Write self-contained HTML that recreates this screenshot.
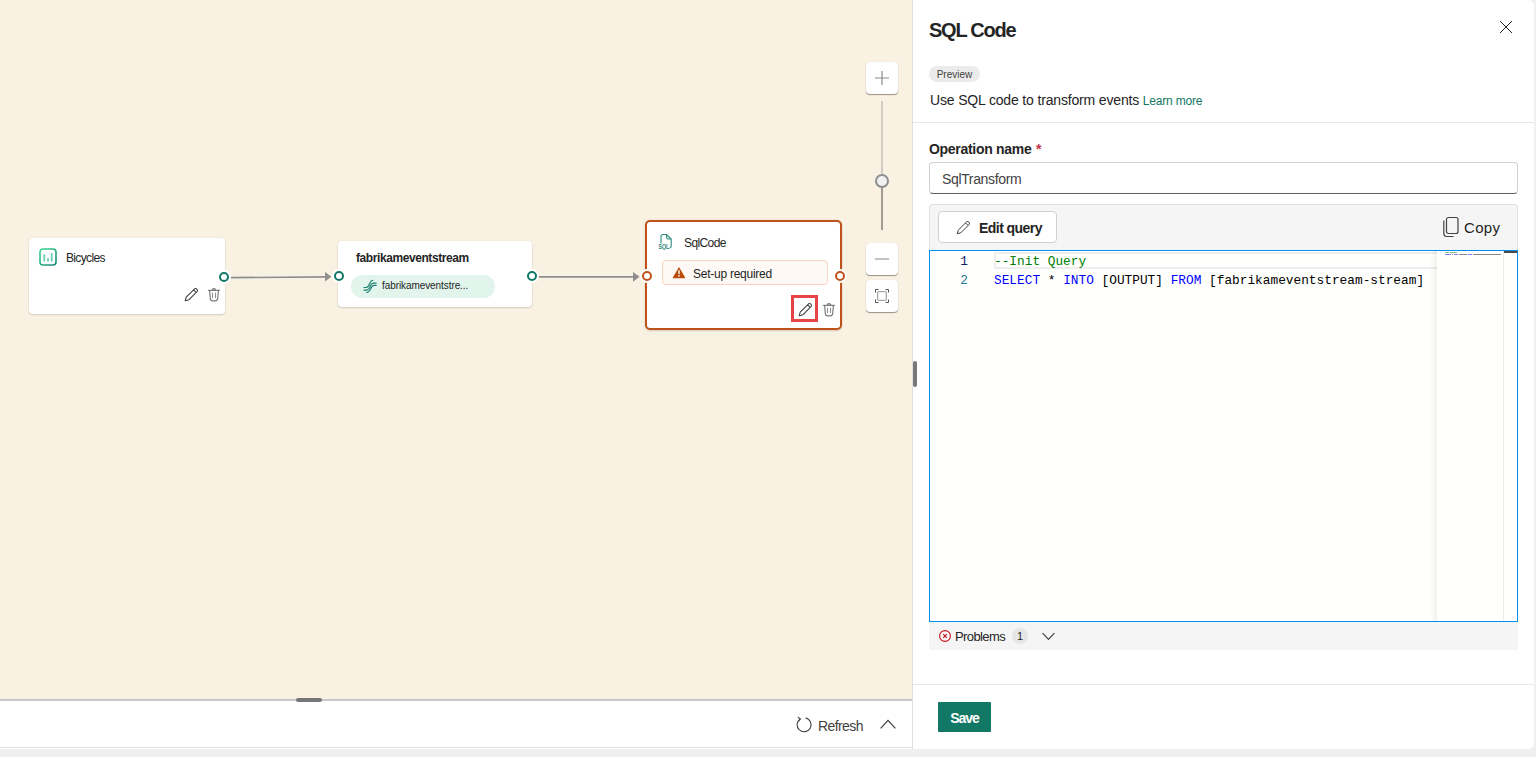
<!DOCTYPE html>
<html><head><meta charset="utf-8">
<style>
*{box-sizing:border-box;margin:0;padding:0}
html,body{width:1536px;height:757px;overflow:hidden;background:#F0F0F0;font-family:"Liberation Sans",sans-serif;color:#242424}
.abs{position:absolute}
.nw{white-space:nowrap}
#canvas{position:absolute;left:0;top:0;width:912px;height:699px;background:#F9F2E3}
#bottombar{position:absolute;left:0;top:699px;width:913px;height:49px;background:#fff;border-top:2px solid #C8C8C8;border-bottom:1px solid #E0E0E0}
#panel{position:absolute;left:912px;top:0;width:622px;height:749px;background:#fff;border-left:1px solid #E0E0E0;border-radius:0 6px 6px 0}
.node{position:absolute;background:#fff;border-radius:4px;box-shadow:0 1px 2px rgba(0,0,0,.14),0 0 2px rgba(0,0,0,.08)}
.port{position:absolute;width:14px;height:14px;border-radius:50%;background:#fff}
.port::after{content:"";position:absolute;left:2px;top:2px;width:10px;height:10px;border-radius:50%;border:2px solid #117865;box-sizing:border-box;background:#fff}
.port.o::after{border-color:#C0531C}
.t12{font-size:12px}
.zbtn{position:absolute;left:866px;width:32px;height:32px;background:#fff;border-radius:4px;box-shadow:0 1px 1px rgba(40,30,20,.45),0 0 1px rgba(0,0,0,.15)}
.code{font-family:"Liberation Mono",monospace;font-size:12.8px;white-space:pre}
.kw{color:#0000FF}
</style></head><body>
<div id="canvas">
  <svg class="abs" style="left:0;top:0" width="912" height="699">
    <path d="M230 277.6 L327 276.9" stroke="#8F8F8F" stroke-width="1.6" fill="none"/>
    <path d="M325 271.9 L331.4 276.7 L325 281.6 Z" fill="#8F8F8F"/>
    <path d="M538 276.9 L635 276.9" stroke="#8F8F8F" stroke-width="1.6" fill="none"/>
    <path d="M633 271.9 L639.6 276.8 L633 281.8 Z" fill="#8F8F8F"/>
  </svg>
  <!-- node 1 -->
  <div class="node" style="left:29px;top:238px;width:196px;height:76px">
    <svg class="abs" style="left:10px;top:10px" width="18" height="18" viewBox="0 0 18 18">
      <defs><linearGradient id="g1" x1="0" y1="0" x2="1" y2="1"><stop offset="0" stop-color="#3BD58E"/><stop offset="1" stop-color="#138573"/></linearGradient></defs>
      <rect x="1" y="1" width="16" height="16" rx="3" fill="none" stroke="url(#g1)" stroke-width="1.6"/>
      <rect x="4.4" y="6.4" width="1.8" height="7.1" fill="#6BCDB5"/><rect x="8.1" y="10" width="1.8" height="3.5" fill="#6BCDB5"/><rect x="11.8" y="5.2" width="1.8" height="8.3" fill="#6BCDB5"/>
    </svg>
    <div class="abs t12 nw" style="left:37px;top:13px;letter-spacing:-0.65px">Bicycles</div>
    <svg class="abs" style="left:155px;top:49px" width="15" height="15" viewBox="0 0 15 15"><path d="M1.2 13.8 L2.2 10.2 L10.6 1.8 A1.9 1.9 0 0 1 13.2 4.4 L4.8 12.8 Z M9.6 2.9 L12.1 5.4" fill="none" stroke="#424242" stroke-width="1.1" stroke-linejoin="round"/></svg>
    <svg class="abs" style="left:178px;top:49px" width="14" height="15" viewBox="0 0 14 15"><path d="M1.6 3.4 H12.4 M5.2 3.4 A1.8 1.8 0 0 1 8.8 3.4 M2.6 3.6 L3.3 11.4 A2.6 2.6 0 0 0 5.9 13.8 H8.1 A2.6 2.6 0 0 0 10.7 11.4 L11.4 3.6" fill="none" stroke="#7A7A7A" stroke-width="1.15" stroke-linecap="round"/><path d="M5.5 6 V10.6 M8.5 6 V10.6" stroke="#909090" stroke-width="1.1" stroke-linecap="round"/></svg>
  </div>
  <div class="port" style="left:217px;top:270px"></div>
  <!-- node 2 -->
  <div class="node" style="left:338px;top:241px;width:194px;height:66px">
    <div class="abs t12 nw" style="left:18px;top:10px;font-weight:bold;letter-spacing:-0.42px">fabrikameventstream</div>
    <div class="abs" style="left:13px;top:34px;width:144px;height:23px;border-radius:12px;background:#E1F5ED"></div>
    <svg class="abs" style="left:25px;top:38px" width="14" height="15" viewBox="0 0 14 15"><path d="M1 8.5 H3.2 C5.4 8.5 5.9 6 6.9 4 C7.7 2.3 8.5 1.4 9.9 1.3 M1 11.1 H3.8 C6.1 11.1 6.6 8.5 7.5 6.5 C8.4 4.6 9.2 4.1 10.6 4.1 H13.2 M3.6 13.5 C5.9 13.3 6.9 11.4 7.9 9.2 C8.7 7.3 9.5 6.3 10.9 6.3 H13.2" fill="none" stroke="#1B7F6E" stroke-width="1.15" stroke-linecap="round"/></svg>
    <div class="abs nw" style="left:44px;top:39px;font-size:10px;letter-spacing:-0.08px">fabrikameventstre...</div>
  </div>
  <div class="port" style="left:332px;top:269px"></div>
  <div class="port" style="left:525px;top:269px"></div>
  <!-- node 3 -->
  <div class="node" style="left:645px;top:220px;width:197px;height:110px;border:2px solid #C0531C;border-radius:5px">
    <svg class="abs" style="left:11px;top:11px" width="16" height="17" viewBox="0 0 16 17"><path d="M3 10.6 V3.4 A1.9 1.9 0 0 1 4.9 1.5 H8.6 L13.2 6.1 V13.2 A2 2 0 0 1 11.6 15.1 M8.6 1.5 V4.6 A1.4 1.4 0 0 0 10 6 H13.2" fill="none" stroke="#2A8C7A" stroke-width="1.1"/><text x="0.6" y="16" font-family="Liberation Sans" font-weight="bold" font-size="6.8" textLength="10.6" lengthAdjust="spacingAndGlyphs" fill="#1B7F6E">SQL</text></svg>
    <div class="abs t12 nw" style="left:37px;top:14px;letter-spacing:-0.6px">SqlCode</div>
    <div class="abs" style="left:15px;top:38px;width:166px;height:25px;border:1px solid #FCD3BC;background:#FFF9F5;border-radius:4px"></div>
    <svg class="abs" style="left:25px;top:44px" width="14" height="13" viewBox="0 0 14 13"><path d="M7 0.9 L13.2 11.6 A0.6 0.6 0 0 1 12.7 12.2 H1.3 A0.6 0.6 0 0 1 0.8 11.6 Z" fill="#BC4B09"/><rect x="6.3" y="4" width="1.4" height="4.2" rx=".7" fill="#fff"/><circle cx="7" cy="9.9" r=".8" fill="#fff"/></svg>
    <div class="abs t12 nw" style="left:46px;top:45px;letter-spacing:-0.25px">Set-up required</div>
    <div class="abs" style="left:144px;top:73px;width:27px;height:27px;border:3px solid #E64548"></div>
    <svg class="abs" style="left:151px;top:80px" width="15" height="15" viewBox="0 0 15 15"><path d="M1.2 13.8 L2.2 10.2 L10.6 1.8 A1.9 1.9 0 0 1 13.2 4.4 L4.8 12.8 Z M9.6 2.9 L12.1 5.4" fill="none" stroke="#424242" stroke-width="1.1" stroke-linejoin="round"/></svg>
    <svg class="abs" style="left:175px;top:80px" width="14" height="15" viewBox="0 0 14 15"><path d="M1.6 3.4 H12.4 M5.2 3.4 A1.8 1.8 0 0 1 8.8 3.4 M2.6 3.6 L3.3 11.4 A2.6 2.6 0 0 0 5.9 13.8 H8.1 A2.6 2.6 0 0 0 10.7 11.4 L11.4 3.6" fill="none" stroke="#7A7A7A" stroke-width="1.15" stroke-linecap="round"/><path d="M5.5 6 V10.6 M8.5 6 V10.6" stroke="#909090" stroke-width="1.1" stroke-linecap="round"/></svg>
  </div>
  <div class="port o" style="left:640px;top:269px"></div>
  <div class="port o" style="left:833px;top:269px"></div>
  <!-- zoom controls -->
  <div class="zbtn" style="top:62px"><svg class="abs" style="left:9px;top:9px" width="14" height="14"><path d="M0 7 H14 M7 0 V14" stroke="#8A8A8A" stroke-width="1.2"/></svg></div>
  <div class="abs" style="left:881px;top:101px;width:2px;height:74px;background:#D2CBBF"></div>
  <div class="abs" style="left:881px;top:186px;width:2px;height:44px;background:#A29C93"></div>
  <div class="abs" style="left:875px;top:174px;width:14px;height:14px;border-radius:50%;border:2px solid #8F8F8F;background:#F1F1F1"></div>
  <div class="zbtn" style="top:243px"><svg class="abs" style="left:9px;top:15px" width="14" height="2"><path d="M0 1 H14" stroke="#A0A0A0" stroke-width="1.3"/></svg></div>
  <div class="zbtn" style="top:280px"><svg class="abs" style="left:9px;top:9px" width="14" height="14" viewBox="0 0 14 14"><path d="M0.5 3.5 V0.5 H3.5 M10.5 0.5 H13.5 V3.5 M13.5 10.5 V13.5 H10.5 M3.5 13.5 H0.5 V10.5" fill="none" stroke="#555" stroke-width="1"/><rect x="2.6" y="2.6" width="8.8" height="8.8" rx="1.5" fill="none" stroke="#A8A8A8" stroke-width="1.3"/></svg></div>
</div>
<!-- bottom bar -->
<div id="bottombar">
  <div class="abs" style="left:296px;top:-3px;width:26px;height:4px;border-radius:2px;background:#767676"></div>
  <svg class="abs" style="left:795px;top:15px" width="18" height="18" viewBox="0 0 18 18"><path d="M5.2 2.9 A7 7 0 1 0 10.6 1.9" fill="none" stroke="#424242" stroke-width="1.1"/><path d="M2.8 1.2 L5.4 2.8 L3.6 5.3" fill="none" stroke="#424242" stroke-width="1.1"/></svg>
  <div class="abs nw" style="left:818px;top:17px;font-size:14px;color:#424242;letter-spacing:-0.6px">Refresh</div>
  <svg class="abs" style="left:880px;top:18px" width="16" height="10" viewBox="0 0 16 10"><path d="M0.6 9.4 L8 1.4 L15.4 9.4" fill="none" stroke="#424242" stroke-width="1.2"/></svg>
</div>
<div class="abs" style="left:0;top:748px;width:913px;height:1px;background:#fff"></div>
<!-- handle -->
<div class="abs" style="left:913px;top:361px;width:4px;height:26px;border-radius:2px;background:#787878;z-index:5"></div>
<!-- panel -->
<div id="panel">
  <div class="abs nw" style="left:16px;top:19px;font-size:20px;font-weight:bold;color:#242424;letter-spacing:-1.25px">SQL Code</div>
  <svg class="abs" style="left:586px;top:20px" width="14" height="14" viewBox="0 0 14 14"><path d="M1 1 L13 13 M13 1 L1 13" stroke="#242424" stroke-width="1"/></svg>
  <div class="abs nw" style="left:16px;top:66px;width:51px;height:16px;border-radius:8px;background:#EBEBEB;font-size:10px;color:#424242;line-height:17px;text-align:center">Preview</div>
  <div class="abs nw" style="left:17px;top:92px;font-size:14px;letter-spacing:-0.16px">Use SQL code to transform events <span style="font-size:12px;color:#117865;letter-spacing:-0.2px;margin-left:0px">Learn more</span></div>
  <div class="abs" style="left:0;top:122px;width:621px;height:1px;background:#E6E6E6"></div>
  <div class="abs nw" style="left:16px;top:141px;font-size:14px;font-weight:bold;letter-spacing:-0.3px">Operation name <span style="color:#C4314B;margin-left:1px">*</span></div>
  <div class="abs" style="left:16px;top:162px;width:589px;height:32px;border:1px solid #D1D1D1;border-bottom-color:#616161;border-radius:4px"></div>
  <div class="abs nw" style="left:29px;top:171px;font-size:14px;color:#424242;letter-spacing:-0.35px">SqlTransform</div>
  <!-- editor wrapper -->
  <div class="abs" style="left:16px;top:204px;width:589px;height:446px;background:#F5F5F5;border:1px solid #E0E0E0;border-bottom:none;border-radius:4px"></div>
  <div class="abs" style="left:25px;top:211px;width:119px;height:32px;background:#fff;border:1px solid #D1D1D1;border-radius:4px"></div>
  <svg class="abs" style="left:43px;top:220px" width="15" height="15" viewBox="0 0 15 15"><path d="M1.2 13.8 L2.2 10.2 L10.6 1.8 A1.9 1.9 0 0 1 13.2 4.4 L4.8 12.8 Z M9.6 2.9 L12.1 5.4" fill="none" stroke="#424242" stroke-width="1" stroke-linejoin="round"/></svg>
  <div class="abs nw" style="left:66px;top:220px;font-size:14px;font-weight:bold;letter-spacing:-0.55px">Edit query</div>
  <svg class="abs" style="left:529px;top:216px" width="18" height="22" viewBox="0 0 18 22"><rect x="4.5" y="1.5" width="11.5" height="16" rx="2" fill="none" stroke="#424242" stroke-width="1.2"/><path d="M1.8 4.5 V17.5 A3 3 0 0 0 4.8 20.5 H11.6" fill="none" stroke="#424242" stroke-width="1.2"/></svg>
  <div class="abs nw" style="left:551px;top:219px;font-size:15px;letter-spacing:0.3px">Copy</div>
  <div id="editor" class="abs" style="left:16px;top:250px;width:589px;height:372px;background:#FFFFFE;border:1px solid #0090F1;overflow:hidden">
    <div class="abs" style="left:64px;top:1px;width:443px;height:17px;border:2px solid #EEEEEE;border-right:none"></div>
    <div class="abs code" style="left:30px;top:3px;color:#0B216F;text-align:right;width:8px">1</div>
    <div class="abs code" style="left:30px;top:22px;color:#237893;width:8px;text-align:right">2</div>
    <div class="abs code" style="left:64px;top:3px;color:#008000">--Init Query</div>
    <div class="abs code" style="left:64px;top:22px;color:#000"><span class="kw">SELECT</span> * <span class="kw">INTO</span> [OUTPUT] <span class="kw">FROM</span> [fabrikameventstream-stream]</div>
    <!-- minimap -->
    <div class="abs" style="left:500px;top:0;width:7px;height:372px;background:linear-gradient(to right,rgba(0,0,0,0),rgba(0,0,0,.06))"></div>
    <div class="abs" style="left:507px;top:0;width:67px;height:372px;background:#FFFFFE;border-right:1px solid #EBEBEB"></div>
    <div class="abs" style="left:515px;top:1px;width:4px;height:1px;background:#7FC07F"></div>
    <div class="abs" style="left:520px;top:1px;width:7px;height:1px;background:#7FC07F"></div>
    <div class="abs" style="left:515px;top:3px;width:6px;height:1px;background:#7F7FFF"></div>
    <div class="abs" style="left:522px;top:3px;width:1px;height:1px;background:#888"></div>
    <div class="abs" style="left:524px;top:3px;width:4px;height:1px;background:#7F7FFF"></div>
    <div class="abs" style="left:529px;top:3px;width:8px;height:1px;background:#888"></div>
    <div class="abs" style="left:538px;top:3px;width:4px;height:1px;background:#7F7FFF"></div>
    <div class="abs" style="left:543px;top:3px;width:28px;height:1px;background:#888"></div>
    <div class="abs" style="left:574px;top:0;width:14px;height:2px;background:#4D4A46"></div>
  </div>
  <div class="abs" style="left:16px;top:622px;width:589px;height:28px;background:#F5F5F5;border-radius:0 0 4px 4px"></div>
  <svg class="abs" style="left:26px;top:630px" width="13" height="13" viewBox="0 0 13 13"><circle cx="6" cy="6" r="5.4" fill="none" stroke="#C50F1F" stroke-width="1.1"/><path d="M4.2 4.2 L7.8 7.8 M7.8 4.2 L4.2 7.8" stroke="#C50F1F" stroke-width="1.1"/></svg>
  <div class="abs nw" style="left:42px;top:629px;font-size:13px;color:#242424;letter-spacing:-0.6px">Problems</div>
  <div class="abs" style="left:99px;top:628px;width:16px;height:16px;border-radius:50%;background:#E6E6E6;font-size:11px;line-height:17px;text-align:center">1</div>
  <svg class="abs" style="left:129px;top:632px" width="14" height="9" viewBox="0 0 14 9"><path d="M0.6 1.2 L6.5 7.4 L12.4 1.2" fill="none" stroke="#424242" stroke-width="1.2"/></svg>
  <div class="abs" style="left:0;top:684px;width:621px;height:1px;background:#E6E6E6"></div>
  <div class="abs nw" style="left:25px;top:702px;width:53px;height:30px;background:#117865;border-radius:1px;color:#fff;font-size:14px;font-weight:bold;line-height:31px;padding-top:1px;text-align:center;letter-spacing:-1px">Save</div>
</div>
</body></html>
